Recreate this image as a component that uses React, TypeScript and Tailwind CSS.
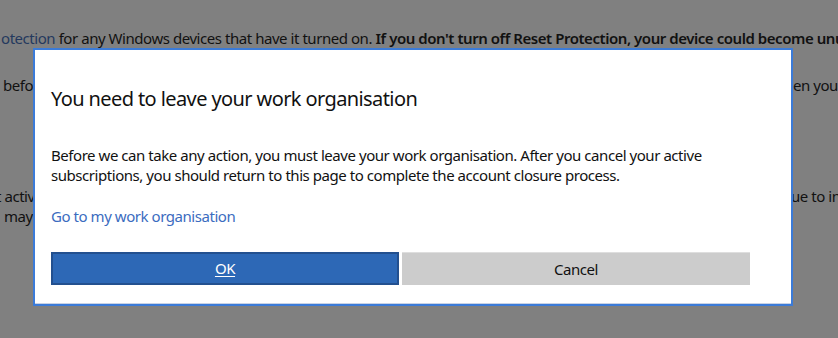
import React from 'react';

const font = { fontFamily: '"Noto Sans", "Open Sans", sans-serif' };

const App = () => {
  return (
    <div className="relative w-[838px] h-[338px] overflow-hidden bg-[#808080] text-[15px] tracking-[-0.45px] text-[#111111]" style={font}>
      {/* page behind the overlay */}
      <div className="pt-[27px]">
        <p className="whitespace-nowrap leading-[22px] pl-[1px]">
          <span className="text-[#24395e]">otection</span> for any Windows devices that have it turned on.{' '}
          <span className="font-semibold">If you don't turn off Reset Protection, your device could become unusable.</span>
        </p>
        <div className="mt-[25px] flex justify-between leading-[22px] whitespace-nowrap">
          <span className="pl-[3px]">before</span>
          <span className="w-[45px] overflow-hidden">en your</span>
        </div>
        <div className="mt-[90px] flex justify-between leading-[20px] whitespace-nowrap">
          <span className="-ml-[4px]">t active</span>
          <span className="w-[47px] overflow-hidden">ue to in</span>
        </div>
        <div className="flex leading-[20px] whitespace-nowrap">
          <span className="pl-[4px]">may</span>
        </div>
      </div>

      {/* dialog */}
      <div className="absolute left-[33px] top-[48px] w-[760px] h-[258px] border-2 border-[#3b7bd8] bg-white">
        <div className="h-full flex flex-col pl-[16px] pr-[41px] pt-[35px] border-b border-[#c9d3e6]">
          <h2 className="text-[20px] tracking-[-0.6px] leading-[28px] text-[#111111]">You need to leave your work organisation</h2>
          <p className="mt-[32px] leading-[20px] text-[#111111]">
            Before we can take any action, you must leave your work organisation. After you cancel your active
            subscriptions, you should return to this page to complete the account closure process.
          </p>
          <a href="#" className="mt-[21px] leading-[20px] text-[#3b6cc0]">Go to my work organisation</a>
          <div className="mt-[26px] flex gap-[3px]">
            <button className="w-[348px] h-[33px] bg-[#2d68b6] border-2 border-[#23508f] text-white underline underline-offset-2">
              OK
            </button>
            <button className="w-[348px] h-[33px] bg-[#cccccc] border-t border-[#dedede] text-[#111111]">
              Cancel
            </button>
          </div>
        </div>
      </div>
    </div>
  );
};

export default App;
